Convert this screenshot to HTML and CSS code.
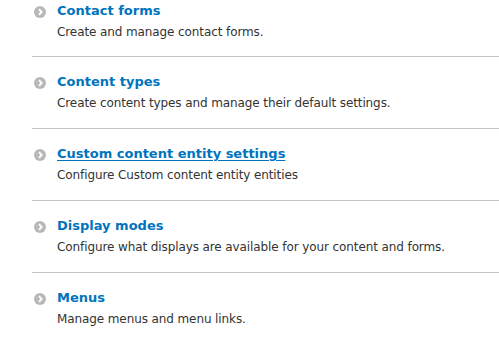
FILE: index.html
```html
<!DOCTYPE html>
<html lang="en">
<head>
<meta charset="utf-8">
<title>Structure</title>
<link rel="stylesheet" href="styles.css">
</head>
<body>
<ul class="admin-list">
  <li class="item">
    <a class="title" href="#"><svg class="arrow" viewBox="0 0 12 12" width="12" height="12"><circle cx="6" cy="6" r="6" fill="#b8b8b8"/><path d="M5 3.2 L7.6 6 L5 8.8" fill="none" stroke="#fff" stroke-width="1.9"/></svg><span class="label">Contact forms</span></a>
    <div class="desc">Create and manage contact forms.</div>
  </li>
  <li class="item">
    <a class="title" href="#"><svg class="arrow" viewBox="0 0 12 12" width="12" height="12"><circle cx="6" cy="6" r="6" fill="#b8b8b8"/><path d="M5 3.2 L7.6 6 L5 8.8" fill="none" stroke="#fff" stroke-width="1.9"/></svg><span class="label">Content types</span></a>
    <div class="desc">Create content types and manage their default settings.</div>
  </li>
  <li class="item">
    <a class="title" href="#"><svg class="arrow" viewBox="0 0 12 12" width="12" height="12"><circle cx="6" cy="6" r="6" fill="#b8b8b8"/><path d="M5 3.2 L7.6 6 L5 8.8" fill="none" stroke="#fff" stroke-width="1.9"/></svg><span class="label underlined">Custom content entity settings</span></a>
    <div class="desc">Configure Custom content entity entities</div>
  </li>
  <li class="item">
    <a class="title" href="#"><svg class="arrow" viewBox="0 0 12 12" width="12" height="12"><circle cx="6" cy="6" r="6" fill="#b8b8b8"/><path d="M5 3.2 L7.6 6 L5 8.8" fill="none" stroke="#fff" stroke-width="1.9"/></svg><span class="label">Display modes</span></a>
    <div class="desc">Configure what displays are available for your content and forms.</div>
  </li>
  <li class="item last">
    <a class="title" href="#"><svg class="arrow" viewBox="0 0 12 12" width="12" height="12"><circle cx="6" cy="6" r="6" fill="#b8b8b8"/><path d="M5 3.2 L7.6 6 L5 8.8" fill="none" stroke="#fff" stroke-width="1.9"/></svg><span class="label">Menus</span></a>
    <div class="desc">Manage menus and menu links.</div>
  </li>
</ul>
</body>
</html>
```
FILE: styles.css
```css
html, body {
  margin: 0;
  padding: 0;
  background: #fff;
}
body {
  font-family: "DejaVu Sans", Verdana, sans-serif;
  color: #333;
}
.admin-list {
  list-style: none;
  margin: 0 0 0 32px;
  padding: 0;
}
.item {
  padding: 14px 0 15px;
  border-bottom: 1px solid #c4c4c4;
}
.item:first-child {
  padding-top: 0;
  padding-bottom: 14px;
}
.item.last {
  border-bottom: none;
}
.title {
  display: flex;
  align-items: center;
  gap: 11px;
  padding-left: 2px;
  height: 22px;
  color: #0074bd;
  font-weight: bold;
  font-size: 13px;
  line-height: 22px;
  text-decoration: none;
}
.arrow {
  flex: none;
  margin-top: 1px;
}
.underlined {
  text-decoration: underline;
  text-underline-offset: 2px;
}
.desc {
  padding-left: 25px;
  font-size: 12px;
  line-height: 20px;
  letter-spacing: -0.1px;
  color: #333;
}
```
